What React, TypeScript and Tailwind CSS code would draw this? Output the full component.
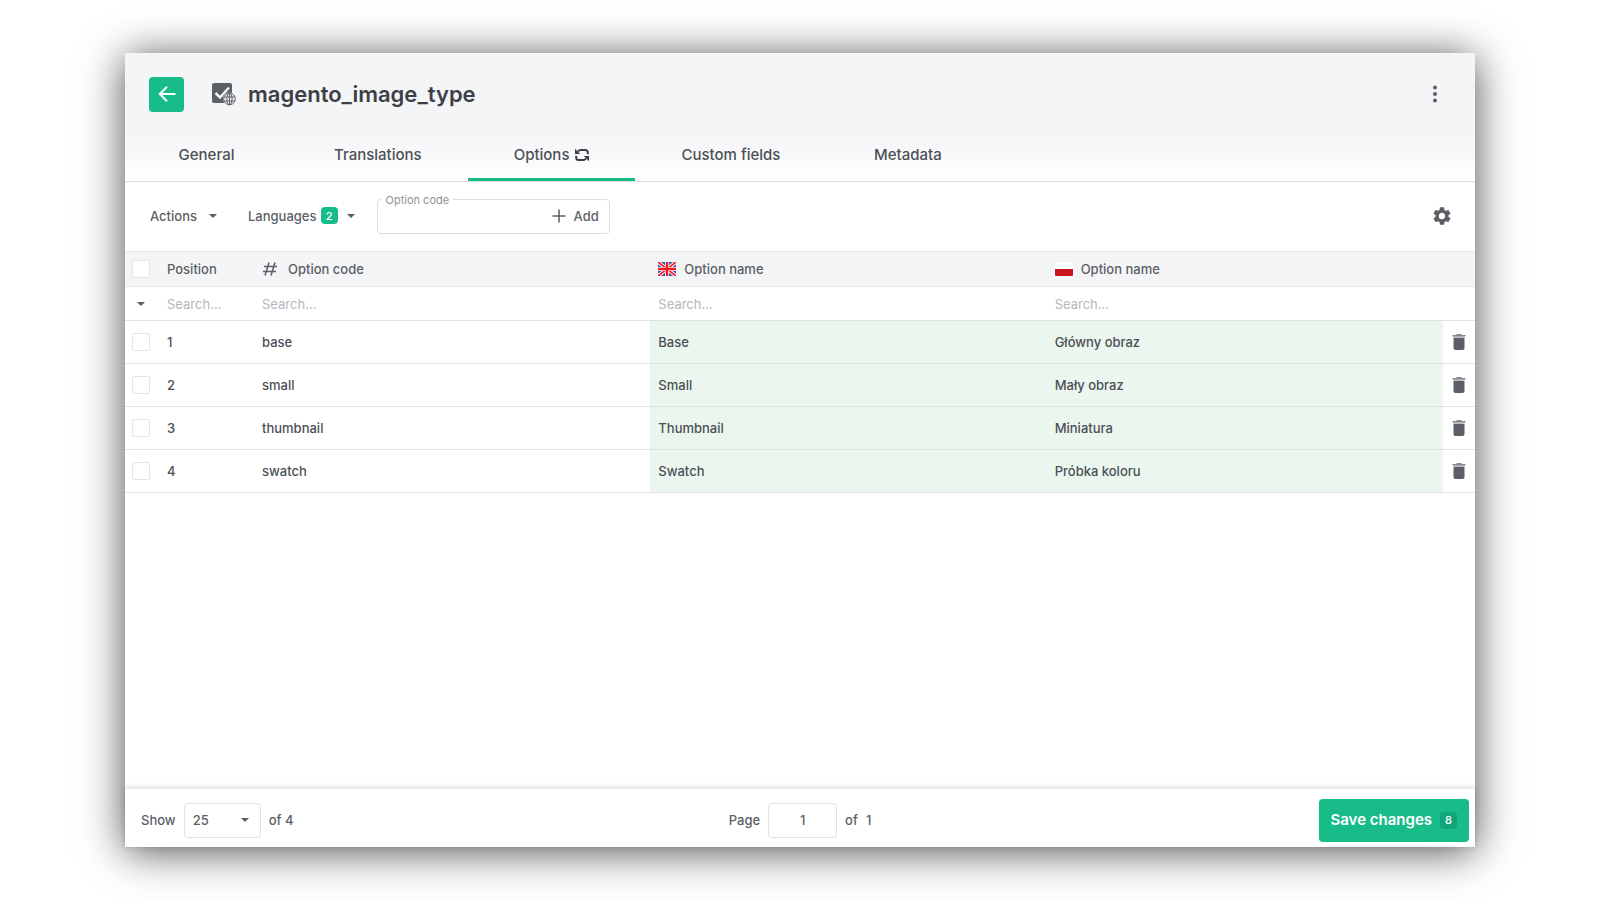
import React, { useState } from 'react';

const tabs = ['General', 'Translations', 'Options', 'Custom fields', 'Metadata'];

const options = [
  { position: 1, code: 'base', en: 'Base', pl: 'Główny obraz' },
  { position: 2, code: 'small', en: 'Small', pl: 'Mały obraz' },
  { position: 3, code: 'thumbnail', en: 'Thumbnail', pl: 'Miniatura' },
  { position: 4, code: 'swatch', en: 'Swatch', pl: 'Próbka koloru' }
];

const searchLabels = ['Position', 'Option code', 'English option name', 'Polish option name'];

function Caret() {
  return (
    <svg viewBox="0 0 8 4" className="w-2 h-1 shrink-0" fill="#5c5f65">
      <path d="M0 0h8L4 4z" />
    </svg>
  );
}

function Checkbox({ label }: { label: string }) {
  return (
    <input
      type="checkbox"
      aria-label={label}
      className="block appearance-none w-[18px] h-[18px] ml-[7px] rounded-xs border border-[#e3e5e6] bg-white checked:bg-[#17bc88]"
    />
  );
}

function AttributeIcon() {
  return (
    <svg viewBox="0 0 24 24" className="w-6 h-6">
      <rect x="0" y="1" width="20" height="20" rx="2" fill="#5c5f65" />
      <path d="M3.500 11l4.500 4.500 9-10" fill="none" stroke="#f4f5f7" strokeWidth="2.500" />
      <circle cx="17.500" cy="17" r="6.500" fill="#f4f5f7" />
      <g fill="none" stroke="#5c5f65" strokeWidth="1">
        <circle cx="17.500" cy="17" r="5.800" />
        <ellipse cx="17.500" cy="17" rx="2.600" ry="5.800" />
        <path d="M17.500 11.200v11.600M12.300 15h10.400M12.300 19h10.400" />
      </g>
    </svg>
  );
}

function SyncIcon() {
  return (
    <svg viewBox="0 0 14 14" className="w-3.5 h-3.5" fill="none" stroke="#3c4046" strokeWidth="2">
      <path d="M12.800 6.200V4.500Q12.800 2 10.300 2H5.500Q4 2 3 3.500" />
      <path d="M1.200 7.800v1.700Q1.200 12 3.700 12h4.800Q10 12 11 10.500" />
      <path d="M0 .8V6h5.200zM14 13.200V8H8.800z" fill="#3c4046" stroke="none" />
    </svg>
  );
}

function GearIcon() {
  return (
    <svg viewBox="2 2 20 20" className="w-[18px] h-[18px]" fill="#5c5f65">
      <path d="M19.140 12.940c.04-.3.060-.610.060-.940 0-.320-.020-.640-.070-.940l2.030-1.580a.49.490 0 0 0 .120-.610l-1.920-3.320a.488.488 0 0 0-.590-.220l-2.390.960c-.5-.380-1.030-.7-1.620-.940l-.360-2.540a.484.484 0 0 0-.480-.410h-3.840c-.240 0-.430.170-.470.410l-.360 2.540c-.590.240-1.130.570-1.620.940l-2.390-.960c-.220-.080-.470 0-.590.220L2.740 8.870c-.120.210-.080.470.120.610l2.030 1.580c-.050.3-.090.630-.090.940s.020.640.070.940l-2.030 1.580a.49.490 0 0 0-.120.610l1.920 3.320c.120.220.370.290.590.220l2.390-.960c.5.380 1.030.7 1.620.940l.360 2.540c.050.240.240.410.480.410h3.840c.240 0 .440-.170.470-.410l.360-2.540c.590-.240 1.130-.560 1.620-.940l2.390.960c.220.080.470 0 .590-.220l1.920-3.320c.120-.220.070-.470-.120-.610zM12 15.600A3.610 3.610 0 0 1 8.400 12c0-1.980 1.620-3.600 3.600-3.600s3.600 1.620 3.600 3.600-1.620 3.600-3.600 3.600z" />
    </svg>
  );
}

function TrashIcon() {
  return (
    <svg viewBox="0 0 14 16" className="w-3.5 h-4" fill="#5c5f65">
      <path d="M1.500 4h11v10a2 2 0 0 1-2 2h-7a2 2 0 0 1-2-2z" />
      <path d="M.5 1H4l1-1h4l1 1h3.500v1.500H.5z" fillOpacity=".75" />
      <path d="M1.500 2.500h11V4h-11z" fillOpacity=".4" />
    </svg>
  );
}

function FlagUk() {
  return (
    <svg viewBox="0 0 18 14" className="w-[18px] h-3.5">
      <rect width="18" height="14" fill="#3f51b5" />
      <path d="M0 0l18 14M18 0L0 14" stroke="#fff" strokeWidth="3.500" />
      <path d="M0 0l18 14M18 0L0 14" stroke="#f2161f" strokeWidth="1.700" />
      <path d="M9 0v14M0 7h18" stroke="#fff" strokeWidth="4" />
      <path d="M9 0v14M0 7h18" stroke="#f2161f" strokeWidth="2.500" />
    </svg>
  );
}

function FlagPl() {
  return (
    <svg viewBox="0 0 18 14" className="w-[18px] h-3.5">
      <rect width="18" height="14" rx="1" fill="#fff" />
      <path d="M0 7h18v6a1 1 0 0 1-1 1H1a1 1 0 0 1-1-1z" fill="#c8141b" />
    </svg>
  );
}

export default function App() {
  const [activeTab, setActiveTab] = useState('Options');
  const [newCode, setNewCode] = useState('');

  return (
    <div className="min-h-screen flex bg-white px-[125px] py-[53px] font-['Inter',sans-serif] text-[13px] leading-5 font-medium text-[#5c5f65]">
      <main className="flex-1 flex flex-col bg-white shadow-[0_4px_40px_rgba(0,0,0,0.7)]">
        <header className="border-b border-[#dcdedf] bg-linear-to-b from-[#f4f5f7] from-65% to-white">
          <div className="flex items-center h-[82px] pl-6 pr-8">
            <button aria-label="Back" className="flex items-center justify-center w-[35px] h-[35px] rounded-sm bg-[#17bc88]">
              <svg viewBox="0 0 18 16" className="w-[18px] h-4" fill="none" stroke="#fff" strokeWidth="2">
                <path d="M17.500 8H2M9 .8L1.800 8 9 15.200" />
              </svg>
            </button>
            <span className="ml-7"><AttributeIcon /></span>
            <h1 className="ml-3 text-[22px] leading-7 font-semibold text-[#3c4046]">magento_image_type</h1>
            <button aria-label="More" className="ml-auto flex justify-center w-4">
              <svg viewBox="0 0 4 18" className="w-1 h-[18px]" fill="#5c5f65">
                <circle cx="2" cy="2.500" r="2" />
                <circle cx="2" cy="9" r="2" />
                <circle cx="2" cy="15.500" r="2" />
              </svg>
            </button>
          </div>
          <nav className="flex h-[46px]">
            {tabs.map((tab) => (
              <button
                key={tab}
                onClick={() => setActiveTab(tab)}
                className={`flex items-center justify-center gap-1.5 min-w-[163px] px-[46px] pb-1 text-[15px] text-[#4c5056] border-b-3 ${
                  activeTab === tab ? 'border-[#17bc88]' : 'border-transparent'
                }`}
              >
                {tab}
                {tab === 'Options' && <SyncIcon />}
              </button>
            ))}
          </nav>
        </header>

        <div className="flex items-center h-[69px] pl-[25px] pr-6 pb-0.5">
          <button className="flex items-center gap-3">
            Actions
            <Caret />
          </button>
          <button className="flex items-center ml-[31px]">
            Languages
            <span className="flex items-center justify-center w-[17px] h-[17px] ml-1 mr-[9px] rounded-sm bg-[#17bc88] text-[11px] text-white">
              2
            </span>
            <Caret />
          </button>
          <fieldset className="w-[233px] h-[42px] mb-1.5 ml-[22px] px-1 border border-[#dcdedf] rounded-sm">
            <legend className="px-1 text-[11px] leading-4 font-normal text-[#8f9399]">
              <label htmlFor="option-code">Option code</label>
            </legend>
            <div className="flex items-center h-[33px] -mt-2">
              <input
                id="option-code"
                value={newCode}
                onChange={(e) => setNewCode(e.target.value)}
                className="w-[170px] h-6 outline-none"
              />
              <button className="flex items-center gap-2">
                <svg viewBox="0 0 14 14" className="w-3.5 h-3.5" stroke="#5c5f65" strokeWidth="1.500">
                  <path d="M7 .5v13M.5 7h13" />
                </svg>
                Add
              </button>
            </div>
          </fieldset>
          <button aria-label="Settings" className="ml-auto"><GearIcon /></button>
        </div>

        <table className="w-full table-fixed border-collapse text-left">
          <colgroup>
            <col className="w-[34px]" />
            <col className="w-[95px]" />
            <col />
            <col />
            <col />
            <col className="w-8" />
          </colgroup>
          <thead>
            <tr className="h-[35px] bg-[#f4f5f7] border-y border-[#e3e5e8]">
              <th><Checkbox label="Select all" /></th>
              <th className="px-2 font-medium">Position</th>
              <th className="px-2 font-medium">
                <div className="flex items-center gap-2.5">
                  <svg viewBox="0 0 16 14" className="w-4 h-3.5" fill="none" stroke="#5c5f65" strokeWidth="1.500">
                    <path d="M7 .5l-4 13M13 .5l-4 13M2 4.500h13M1 9.500h13" />
                  </svg>
                  Option code
                </div>
              </th>
              <th className="px-2 font-medium">
                <div className="flex items-center gap-2"><FlagUk />Option name</div>
              </th>
              <th className="px-2 font-medium">
                <div className="flex items-center gap-2"><FlagPl />Option name</div>
              </th>
              <th></th>
            </tr>
            <tr className="h-[34px] border-b border-[#dfe1e3]">
              <td>
                <button aria-label="Filter" className="flex ml-3 py-1"><Caret /></button>
              </td>
              {searchLabels.map((label) => (
                <td key={label} className="px-2">
                  <input
                    aria-label={label}
                    placeholder="Search..."
                    className="block w-full font-normal outline-none placeholder:text-[#b4b7bb]"
                  />
                </td>
              ))}
              <td></td>
            </tr>
          </thead>
          <tbody className="text-[#4c5056]">
            {options.map((option) => (
              <tr key={option.code} className="h-[43px] border-b border-[#dfe3e2]">
                <td><Checkbox label={`Select ${option.code}`} /></td>
                <td className="px-2">{option.position}</td>
                <td className="px-2">{option.code}</td>
                <td className="px-2 bg-[#ebf6ee]">{option.en}</td>
                <td className="px-2 bg-[#ebf6ee]">{option.pl}</td>
                <td>
                  <button aria-label={`Delete ${option.code}`} className="flex mx-auto"><TrashIcon /></button>
                </td>
              </tr>
            ))}
          </tbody>
        </table>

        <footer className="grid grid-cols-3 items-center h-[58px] mt-auto px-1.5 pt-1 shadow-[0_-1px_6px_rgba(0,0,0,0.16)]">
          <div className="flex items-center gap-2 pl-2.5">
            <label htmlFor="page-size">Show</label>
            <div className="grid items-center w-[77px]">
              <select
                id="page-size"
                className="col-start-1 row-start-1 appearance-none h-[35px] px-2 border border-[#dfe1e3] rounded-sm bg-white"
              >
                <option>25</option>
                <option>50</option>
                <option>100</option>
              </select>
              <span className="col-start-1 row-start-1 justify-self-end mr-3 pointer-events-none"><Caret /></span>
            </div>
            <span>of 4</span>
          </div>
          <div className="flex items-center justify-center gap-2">
            <label htmlFor="page">Page</label>
            <input
              id="page"
              defaultValue="1"
              className="w-[69px] h-[35px] border border-[#dfe1e3] rounded-sm text-center"
            />
            <span>of</span>
            <span>1</span>
          </div>
          <button className="flex items-center justify-self-end gap-2 h-[43px] px-3 rounded-sm bg-[#17bc88] text-[15px] font-semibold text-white">
            Save changes
            <span className="flex items-center justify-center w-[17px] h-[17px] rounded-sm bg-[#13a577] text-[11px] font-medium">8</span>
          </button>
        </footer>
      </main>
    </div>
  );
}
